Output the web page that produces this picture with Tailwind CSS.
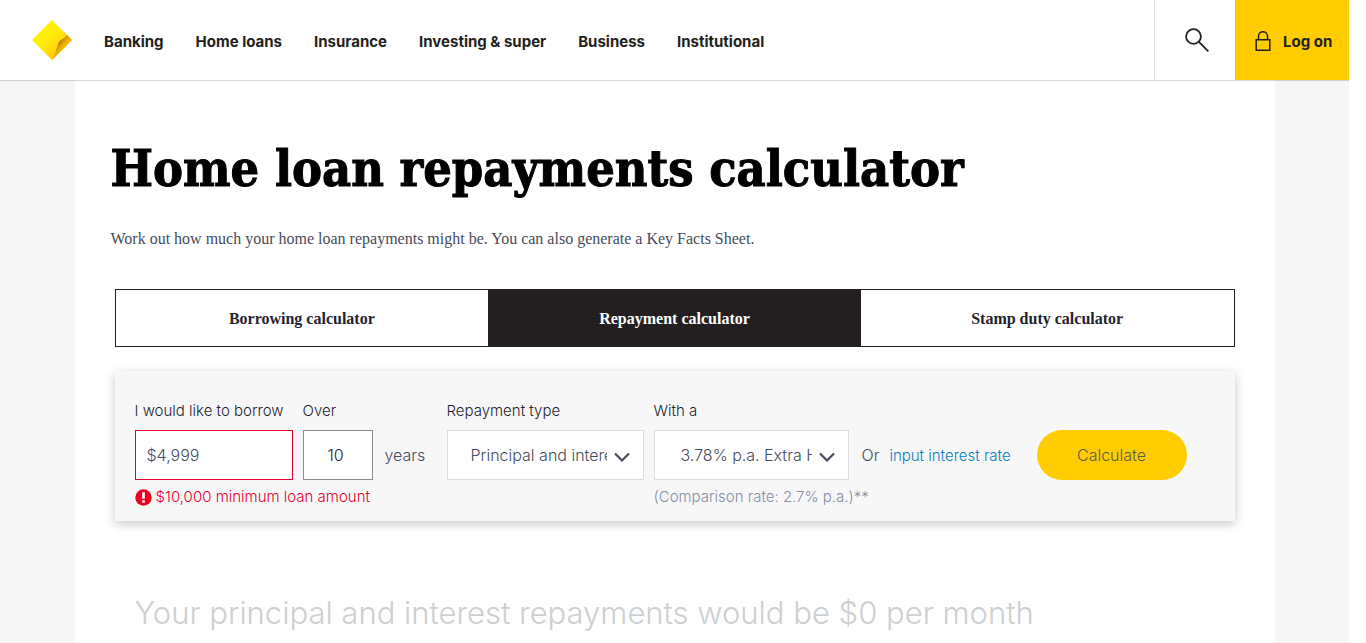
<!DOCTYPE html>
<html lang="en">
<head>
<meta charset="utf-8">
<meta name="viewport" content="width=device-width, initial-scale=1">
<title>Home loan repayments calculator</title>
<script src="https://cdn.jsdelivr.net/npm/@tailwindcss/browser@4"></script>
</head>
<body class="h-screen overflow-hidden bg-white pr-[17px] font-['Inter','Liberation_Sans',sans-serif] text-base text-[#231f20]">
<div class="flex min-h-full flex-col bg-[#f6f6f6]">
  <header class="relative flex h-20 shrink-0 items-stretch bg-white shadow-[0_1px_1px_rgba(0,0,0,0.16)]">
    <a href="#" aria-label="Home" class="flex items-center pl-8">
      <svg class="size-10" viewBox="0 0 40 40" aria-hidden="true">
        <defs>
          <linearGradient id="g1" x1="0.2" y1="0.2" x2="0.7" y2="0.8"><stop offset="0" stop-color="#fff500"/><stop offset="0.5" stop-color="#ffe80a"/><stop offset="1" stop-color="#fc0"/></linearGradient>
          <linearGradient id="g2" gradientUnits="userSpaceOnUse" x1="27" y1="21" x2="34" y2="27"><stop offset="0" stop-color="#a87200"/><stop offset="0.45" stop-color="#dfa400"/><stop offset="1" stop-color="#ffc400"/></linearGradient>
        </defs>
        <path d="M20 0 40 20 20 40 0 20Z" fill="url(#g1)"/>
        <path d="M35 15 40 20 20 40C22.500 36 23.500 31 25.500 26 26.500 22.500 27 21.500 29 20 31.500 18.500 33.500 17 35 15Z" fill="url(#g2)"/>
      </svg>
    </a>
    <nav class="flex flex-1 items-center gap-8 pt-1 pl-8 text-[15px] font-bold" aria-label="Main">
      <a href="#">Banking</a>
      <a href="#">Home loans</a>
      <a href="#">Insurance</a>
      <a href="#">Investing &amp; super</a>
      <a href="#">Business</a>
      <a href="#">Institutional</a>
    </nav>
    <button type="button" aria-label="Search" class="flex w-[81px] items-center justify-center border-l border-[#e0e0e0] pl-1">
      <svg class="size-6" viewBox="0 0 24 24" fill="none" stroke="#231f20" stroke-width="1.8" aria-hidden="true"><circle cx="8.500" cy="8.500" r="7.400"/><path d="M13.700 13.700 23.300 23.300"/></svg>
    </button>
    <a href="#" class="flex w-[114px] items-center gap-3 bg-[#fc0] pt-[2px] pl-5 text-[15px] font-bold">
      <svg class="h-5 w-4" viewBox="0 0 16 20" fill="none" stroke="#231f20" stroke-width="1.500" aria-hidden="true"><path d="M1.200 8.700H14.800V19.200H1.200Z"/><path d="M3.500 8.700V5.200a4.500 4.500 0 0 1 9 0V8.700"/></svg>
      <span class="pt-[2px]">Log on</span>
    </a>
  </header>

  <main class="mx-auto w-full max-w-[1200px] flex-1 bg-white px-9 pt-14">
    <h1 class="font-['DejaVu_Serif_Condensed','DejaVu_Serif',serif] text-[50px] leading-[66px] font-bold text-black [-webkit-text-stroke:1px_black]">Home loan repayments calculator</h1>
    <p class="mt-[25px] font-['Liberation_Serif',serif] leading-6 text-[#464c5b]">Work out how much your home loan repayments might be. You can also generate a Key Facts Sheet.</p>

    <nav aria-label="Calculators" class="mx-1 mt-[38px] grid h-[58px] grid-cols-3 border border-[#231f20] font-['Liberation_Serif',serif] font-bold text-[#1f2430]">
      <a href="#" class="flex items-center justify-center pt-[2px]">Borrowing calculator</a>
      <a href="#" aria-current="page" class="flex items-center justify-center bg-[#231f20] pt-[2px] text-white">Repayment calculator</a>
      <a href="#" class="flex items-center justify-center pt-[2px]">Stamp duty calculator</a>
    </nav>

    <form class="mx-1 mt-6 grid grid-cols-[158px_134px_197px_195px_168px_150px] gap-x-[10px] bg-[#f7f7f7] px-5 pt-7 pb-3 font-light text-[#464c5b] shadow-[0_3px_10px_rgba(0,0,0,0.22)]">
      <label for="amount" class="h-[31px] text-[15px] leading-6 whitespace-nowrap text-[#1f2430]">I would like to borrow</label>
      <label for="term" class="text-[15px] leading-6 text-[#1f2430]">Over</label>
      <label for="type" class="text-[15px] leading-6 text-[#1f2430]">Repayment type</label>
      <label for="rate" class="col-span-3 text-[15px] leading-6 text-[#1f2430]">With a</label>

      <input id="amount" type="text" value="$4,999" aria-invalid="true" aria-describedby="amount-error" class="h-[50px] w-full border border-[#e4002b] bg-white px-[11px]">
      <div class="flex items-center gap-3">
        <input id="term" type="text" value="10" class="h-[50px] w-[70px] border border-[#8c8c8c] bg-white pr-2 pl-1 text-center text-[#1f2430]">
        <span>years</span>
      </div>
      <div class="relative">
        <select id="type" class="h-[50px] w-full appearance-none border border-[#dcdcdc] bg-white pr-9 pl-[23px]"><option>Principal and interest</option><option>Interest only</option></select>
        <svg class="pointer-events-none absolute top-[22px] right-[14px] h-3 w-4" viewBox="0 0 16 12" fill="none" stroke="#464c5b" stroke-width="2.200" aria-hidden="true"><path d="M1 1.500 8 8.500 15 1.500"/></svg>
      </div>
      <div class="relative">
        <select id="rate" class="h-[50px] w-full appearance-none border border-[#dcdcdc] bg-white pr-9 pl-[26px]"><option>3.78% p.a. Extra Home Loan</option></select>
        <svg class="pointer-events-none absolute top-[22px] right-[14px] h-3 w-4" viewBox="0 0 16 12" fill="none" stroke="#464c5b" stroke-width="2.200" aria-hidden="true"><path d="M1 1.500 8 8.500 15 1.500"/></svg>
      </div>
      <div class="flex items-baseline gap-[10px] pt-[13px] pl-[3px] leading-6 whitespace-nowrap"><span>Or</span><a href="#" class="text-[15px] text-[#0a7cc1]">input interest rate</a></div>
      <button type="button" class="h-[50px] rounded-full bg-[#fc0] font-light text-[#5f5a4a]">Calculate</button>

      <p id="amount-error" class="col-span-3 mt-[5px] flex items-center gap-1 text-[15px] leading-6 text-[#e4002b]">
        <svg class="size-[17px]" viewBox="0 0 17 17" aria-hidden="true"><circle cx="8.500" cy="8.500" r="8.200" fill="#f0001e"/><path d="M7.200 3.200H9.800V9.800H7.200ZM7.200 11.300H9.800V13.700H7.200Z" fill="#fff"/></svg>
        $10,000 minimum loan amount
      </p>
      <p class="col-span-3 mt-[5px] text-[15px] leading-6 text-[#868fa6]">(Comparison rate: 2.7% p.a.)**</p>
    </form>

    <h2 class="mt-[68px] px-6 text-[31px] leading-[48px] font-light whitespace-nowrap text-[#cdcfd0]">Your principal and interest repayments would be $0 per month</h2>
  </main>
</div>
</body>
</html>
